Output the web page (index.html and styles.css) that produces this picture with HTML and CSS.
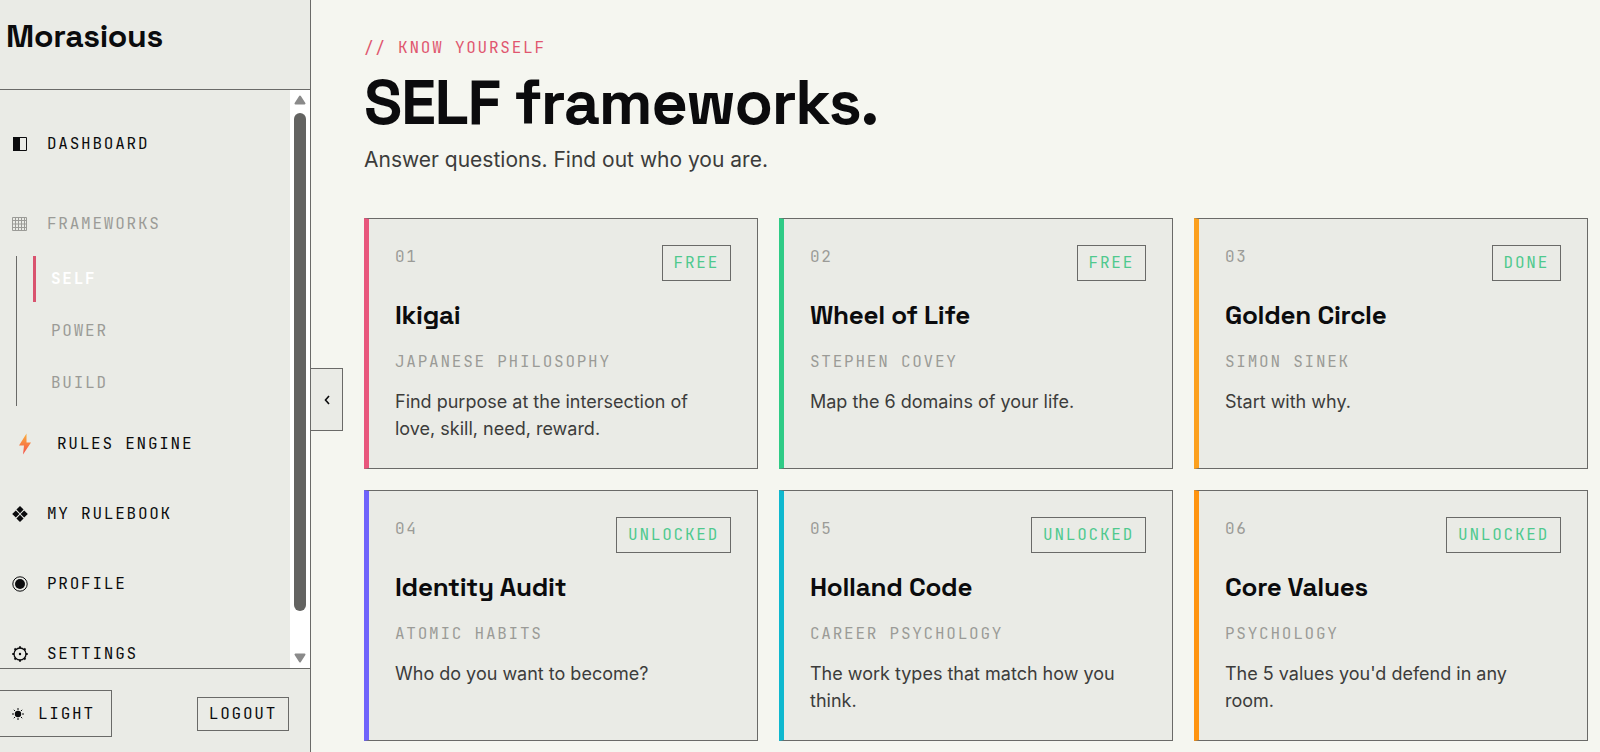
FILE: index.html
```html
<!DOCTYPE html>
<html lang="en">
<head>
<meta charset="utf-8">
<title>Morasious</title>
<link rel="stylesheet" href="styles.css">
</head>
<body>
<div class="app">
  <aside class="sidebar">
    <header class="brand">Morasious</header>
    <div class="scroll-area">
      <nav class="nav">
        <a class="nav-item" href="#">
          <svg class="icon" viewBox="0 0 16 16"><path d="M1.500 1.500h13v13h-13z" fill="none" stroke="currentColor"/><path d="M1 1h7v14H1z" fill="currentColor"/></svg>
          Dashboard
        </a>
        <div class="nav-group">
          <a class="nav-item muted" href="#">
            <svg class="icon" viewBox="0 0 16 16"><path d="M.5 1.500h14v13H.5zM3.500 1v14M6.500 1v14M9.500 1v14M12.500 1v14M0 4.500h15M0 8h15M0 11.500h15" fill="none" stroke="currentColor"/></svg>
            Frameworks
          </a>
          <div class="subnav">
            <a class="sub-item active" href="#">Self</a>
            <a class="sub-item" href="#">Power</a>
            <a class="sub-item" href="#">Build</a>
          </div>
        </div>
        <a class="nav-item" href="#">
          <svg class="icon bolt" viewBox="0 0 26 24"><defs><linearGradient id="bolt" x1="0" y1="0" x2="0" y2="1"><stop offset="0" stop-color="#fbb03b"/><stop offset="1" stop-color="#f4504a"/></linearGradient></defs><path d="M14.500 1.500 7 13.500h5L11 22.500 19 10.500h-4.500z" fill="url(#bolt)"/></svg>
          Rules Engine
        </a>
        <a class="nav-item" href="#">
          <svg class="icon" viewBox="0 0 16 16"><path d="m8 0 3.600 3.600L8 7.200 4.400 3.600zM8 8.800l3.600 3.600L8 16l-3.600-3.600zM3.800 4.400 7.400 8l-3.600 3.600L.2 8zM12.200 4.400 15.800 8l-3.600 3.600L8.600 8z" fill="currentColor"/></svg>
          My Rulebook
        </a>
        <a class="nav-item" href="#">
          <svg class="icon" viewBox="0 0 16 16"><circle cx="8" cy="8" r="7.200" fill="none" stroke="currentColor"/><circle cx="8" cy="8" r="5" fill="currentColor"/></svg>
          Profile
        </a>
        <a class="nav-item" href="#">
          <svg class="icon" viewBox="0 0 16 16"><circle cx="8" cy="8" r="6" fill="none" stroke="currentColor" stroke-width="1.300"/><circle cx="8" cy="8" r="1.200" fill="currentColor"/><path d="M8 .3v2M8 13.700v2M.3 8h2M13.700 8h2M2.500 2.500 4 4M12 12l1.500 1.500M13.500 2.500 12 4M4 12l-1.500 1.500" stroke="currentColor" stroke-width="1.800"/></svg>
          Settings
        </a>
      </nav>
      <div class="scrollbar" aria-hidden="true">
        <svg class="arrow" viewBox="0 0 12 10"><path d="M6 1.500 10.500 8.500h-9z" fill="#8a8a8a" stroke="#8a8a8a" stroke-width="2" stroke-linejoin="round"/></svg>
        <div class="track"><div class="thumb"></div></div>
        <svg class="arrow" viewBox="0 0 12 10"><path d="M6 8.500 1.500 1.500h9z" fill="#8a8a8a" stroke="#8a8a8a" stroke-width="2" stroke-linejoin="round"/></svg>
      </div>
    </div>
    <footer class="side-footer">
      <button class="theme" type="button">
        <svg class="sun" viewBox="0 0 12 12"><circle cx="6" cy="6" r="3.200" fill="currentColor"/><path d="M6 0v2M6 10v2M0 6h2M10 6h2M1.800 1.800 3 3M9 9l1.200 1.200M10.200 1.800 9 3M3 9l-1.200 1.200" stroke="currentColor" stroke-width="1"/></svg>
        Light
      </button>
      <button class="logout" type="button">Logout</button>
    </footer>
    <button class="collapse" type="button" aria-label="Collapse sidebar">
      <svg class="chevron" viewBox="0 0 6 10"><path d="M5 1 1.500 5 5 9" fill="none" stroke="currentColor" stroke-width="1.600"/></svg>
    </button>
  </aside>
  <main class="main">
    <p class="kicker">// Know yourself</p>
    <h1 class="title">SELF frameworks.</h1>
    <p class="lead">Answer questions. Find out who you are.</p>
    <section class="grid">
      <article class="card pink">
        <div class="card-top"><span class="num">01</span><span class="badge">Free</span></div>
        <h2 class="card-title">Ikigai</h2>
        <p class="source">Japanese Philosophy</p>
        <p class="desc">Find purpose at the intersection of love, skill, need, reward.</p>
      </article>
      <article class="card green">
        <div class="card-top"><span class="num">02</span><span class="badge">Free</span></div>
        <h2 class="card-title">Wheel of Life</h2>
        <p class="source">Stephen Covey</p>
        <p class="desc">Map the 6 domains of your life.</p>
      </article>
      <article class="card amber">
        <div class="card-top"><span class="num">03</span><span class="badge">Done</span></div>
        <h2 class="card-title">Golden Circle</h2>
        <p class="source">Simon Sinek</p>
        <p class="desc">Start with why.</p>
      </article>
      <article class="card violet">
        <div class="card-top"><span class="num">04</span><span class="badge">Unlocked</span></div>
        <h2 class="card-title">Identity Audit</h2>
        <p class="source">Atomic Habits</p>
        <p class="desc">Who do you want to become?</p>
      </article>
      <article class="card teal">
        <div class="card-top"><span class="num">05</span><span class="badge">Unlocked</span></div>
        <h2 class="card-title">Holland Code</h2>
        <p class="source">Career Psychology</p>
        <p class="desc">The work types that match how you think.</p>
      </article>
      <article class="card orange">
        <div class="card-top"><span class="num">06</span><span class="badge">Unlocked</span></div>
        <h2 class="card-title">Core Values</h2>
        <p class="source">Psychology</p>
        <p class="desc">The 5 values you'd defend in any room.</p>
      </article>
    </section>
  </main>
</div>
</body>
</html>
```
FILE: styles.css
```css
:root {
  --bg: #f5f6f0;
  --panel: #eaebe6;
  --ink: #0b0b0d;
  --line: #6a6a68;
  --muted: #9b9b97;
  --mono: "JetBrains Mono", "DejaVu Sans Mono", monospace;
  --display: "Space Grotesk", Inter, sans-serif;
}
* { box-sizing: border-box; }
body {
  margin: 0;
  background: var(--bg);
  color: var(--ink);
  font-family: Inter, sans-serif;
}
h1, h2, p { margin: 0; }
a { color: inherit; text-decoration: none; }
button {
  color: inherit;
  background: none;
  border: 1px solid var(--line);
  border-radius: 0;
}
.app { display: flex; height: 100vh; overflow: hidden; }

.sidebar {
  position: relative;
  flex: none;
  width: 311px;
  display: flex;
  flex-direction: column;
  background: var(--panel);
  border-right: 1px solid var(--line);
}
.brand {
  height: 90px;
  padding: 16px 6px;
  border-bottom: 1px solid var(--line);
  font: 700 32px/40px var(--display);
  letter-spacing: -0.01em;
}
.scroll-area { flex: 1; min-height: 0; display: flex; }
.nav {
  flex: 1;
  overflow: hidden;
  display: flex;
  flex-direction: column;
  gap: 6px;
  padding-top: 22px;
}
.nav-item, .sub-item, .theme, .logout, .num, .badge, .source, .kicker {
  font-family: var(--mono);
  font-size: 16px;
  line-height: 24px;
  letter-spacing: 0.11em;
  text-transform: uppercase;
}
.nav-item {
  flex: none;
  display: flex;
  align-items: center;
  gap: 19px;
  height: 64px;
  padding-left: 12px;
}
.muted, .sub-item { color: var(--muted); }
.icon { width: 16px; height: 16px; flex: none; }
.bolt { width: 26px; height: 24px; }
.nav-group { flex: none; margin-top: 10px; }
.subnav {
  display: flex;
  flex-direction: column;
  gap: 6px;
  margin-left: 16px;
  padding-left: 16px;
  border-left: 1px solid var(--line);
}
.sub-item {
  display: flex;
  align-items: center;
  height: 46px;
  padding-left: 15px;
  border-left: 3px solid transparent;
}
.sub-item.active {
  color: #fff;
  font-weight: 700;
  border-left-color: #d9536f;
}
.scrollbar {
  flex: none;
  width: 20px;
  display: flex;
  flex-direction: column;
  align-items: center;
  gap: 8px;
  padding: 5px 0;
  background: #fff;
}
.arrow { width: 12px; height: 10px; flex: none; }
.track { flex: 1; width: 12px; padding-bottom: 34px; }
.thumb { height: 100%; border-radius: 6px; background: #636361; }
.side-footer {
  flex: none;
  display: flex;
  align-items: center;
  justify-content: space-between;
  padding: 21px 21px 15px 0;
  border-top: 1px solid var(--line);
}
.theme {
  display: flex;
  align-items: center;
  gap: 14px;
  height: 47px;
  padding: 0 16px 0 12px;
  border-left: 0;
}
.sun { width: 12px; height: 12px; }
.logout { height: 34px; padding: 0 11px; line-height: 32px; }
.collapse {
  position: absolute;
  top: 368px;
  left: 100%;
  width: 33px;
  height: 63px;
  display: flex;
  align-items: center;
  justify-content: center;
  padding: 0;
  background: var(--panel);
}
.chevron { width: 6px; height: 10px; }

.main { flex: 1; min-width: 0; padding: 36px 12px 10px 53px; }
.kicker { color: #e0566f; }
.title {
  margin-top: 8px;
  font: 700 63px/68px var(--display);
  letter-spacing: -0.02em;
}
.lead {
  margin-top: 8px;
  color: #3c3c3b;
  font-size: 21px;
  line-height: 32px;
}
.grid {
  display: grid;
  grid-template-columns: repeat(3, 1fr);
  gap: 21px;
  margin-top: 42px;
}
.card {
  padding: 26px;
  background: var(--panel);
  border: 1px solid var(--line);
  border-left-width: 5px;
}
.pink { border-left-color: #e8567c; }
.green { border-left-color: #2fcb86; }
.amber { border-left-color: #fca01e; }
.violet { border-left-color: #6f63fb; }
.teal { border-left-color: #0fb8cf; }
.orange { border-left-color: #ff9410; }
.card-top {
  display: flex;
  align-items: flex-start;
  justify-content: space-between;
}
.num { color: var(--muted); }
.badge {
  padding: 5px 11px;
  border: 1px solid var(--line);
  color: #4fc98e;
}
.card-title {
  margin-top: 18px;
  font: 600 26px/32px var(--display);
  letter-spacing: -0.01em;
}
.source { margin-top: 19px; color: var(--muted); }
.desc {
  min-height: 54px;
  margin-top: 14px;
  color: #3c3c3b;
  font-size: 18px;
  line-height: 27px;
}
```
